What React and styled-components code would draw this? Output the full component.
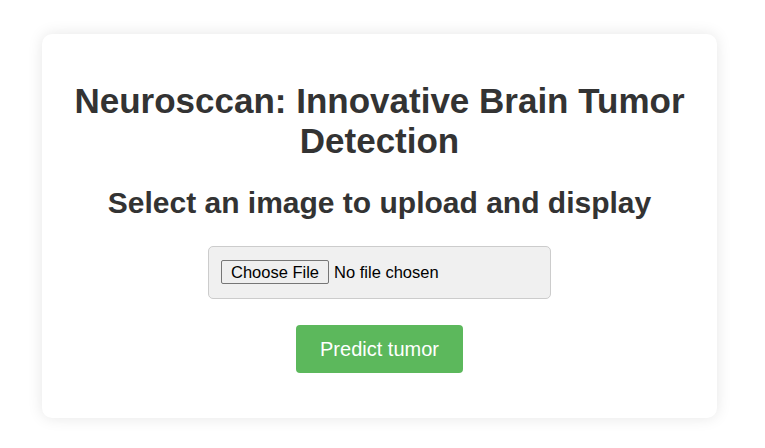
import styled, { createGlobalStyle } from 'styled-components';

const GlobalStyle = createGlobalStyle`
  html, body {
    margin: 0;
    padding: 0;
    background: #fff;
  }
  body {
    font-family: "Liberation Sans", Arial, sans-serif;
    color: #333;
  }
`;

const Page = styled.div`
  padding: 34px 0 30px 42px;
`;

const Card = styled.div`
  width: 675px;
  box-sizing: border-box;
  padding: 47px 30px 45px;
  background: #fff;
  border-radius: 10px;
  box-shadow: 0 0 15px rgba(0, 0, 0, 0.1);
  text-align: center;
`;

const Title = styled.h1`
  font-size: 35px;
  font-weight: bold;
  margin: 0 0 25px;
  color: #333;
`;

const Subtitle = styled.h2`
  font-size: 30px;
  font-weight: bold;
  margin: 0 0 26px;
  color: #333;
`;

const UploadBox = styled.div`
  display: inline-block;
  width: 343px;
  box-sizing: border-box;
  padding: 12px;
  background: #f0f0f0;
  border: 1px solid #ccc;
  border-radius: 5px;
  margin-bottom: 26px;
  text-align: left;
`;

const FileInput = styled.input`
  display: block;
  width: 317px;
  height: 27px;
  font-family: "Liberation Sans", Arial, sans-serif;
  font-size: 16.5px;
  color: #000;

  &::file-selector-button {
    height: 24px;
    margin: 1px 5px 0 0;
    padding: 1px 9px;
    font-family: "Liberation Sans", Arial, sans-serif;
    font-size: 16.5px;
    color: #000;
    background: #efefef;
    border: 1px solid #767676;
    border-radius: 2px;
  }
`;

const PredictButton = styled.button`
  display: block;
  margin: 0 auto;
  padding: 12px 24.5px;
  line-height: 24px;
  font-family: "Liberation Sans", Arial, sans-serif;
  font-size: 20px;
  color: #fff;
  background: #5cb85c;
  border: none;
  border-radius: 4px;
  cursor: pointer;
`;

const App = () => {
  return (
    <>
      <GlobalStyle />
      <Page>
        <Card>
          <Title>Neurosccan: Innovative Brain Tumor Detection</Title>
          <Subtitle>Select an image to upload and display</Subtitle>
          <UploadBox>
            <FileInput type="file" accept="image/*" />
          </UploadBox>
          <PredictButton type="button">Predict tumor</PredictButton>
        </Card>
      </Page>
    </>
  );
};

export default App;
